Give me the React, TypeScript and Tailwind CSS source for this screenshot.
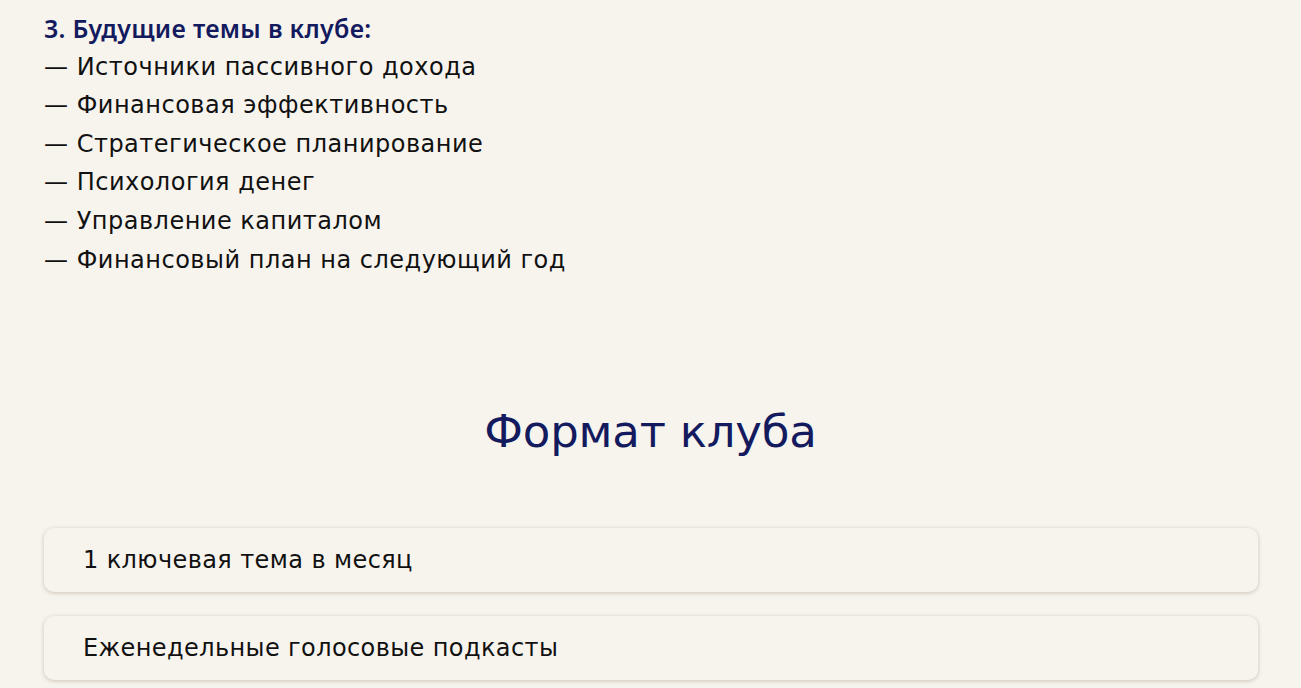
import React from "react";

const items = [
  "Источники пассивного дохода",
  "Финансовая эффективность",
  "Стратегическое планирование",
  "Психология денег",
  "Управление капиталом",
  "Финансовый план на следующий год",
];

export default function App() {
  return (
    <div
      className="min-h-[688px] w-full bg-[#f7f4ee] text-[#111111]"
      style={{ fontFamily: '"DejaVu Sans", "Noto Sans", sans-serif' }}
    >
      <div className="px-[44px] pt-[9px]">
        <div
          className="text-[25px] leading-[38.6px] font-semibold text-[#141a5e] tracking-[0.3px]"
          style={{ fontFamily: '"Noto Sans", sans-serif' }}
        >
          3. Будущие темы в клубе:
        </div>
        {items.map((t) => (
          <div key={t} className="text-[24px] leading-[38.6px] tracking-[0.5px]">
            — {t}
          </div>
        ))}
        <h2 className="mt-[124px] text-center text-[45px] leading-[58px] text-[#141a5e] tracking-[-0.2px]">
          Формат клуба
        </h2>
        <div className="mt-[67px] flex flex-col gap-[24px] w-[1214px]">
          {["1 ключевая тема в месяц", "Еженедельные голосовые подкасты"].map((t) => (
            <div
              key={t}
              className="h-[64px] flex items-center rounded-[10px] bg-[#f7f4ee] px-[39px] text-[24px] tracking-[0.4px] shadow-[0_1px_4px_rgba(120,100,70,0.35)]"
            >
              {t}
            </div>
          ))}
        </div>
      </div>
    </div>
  );
}
